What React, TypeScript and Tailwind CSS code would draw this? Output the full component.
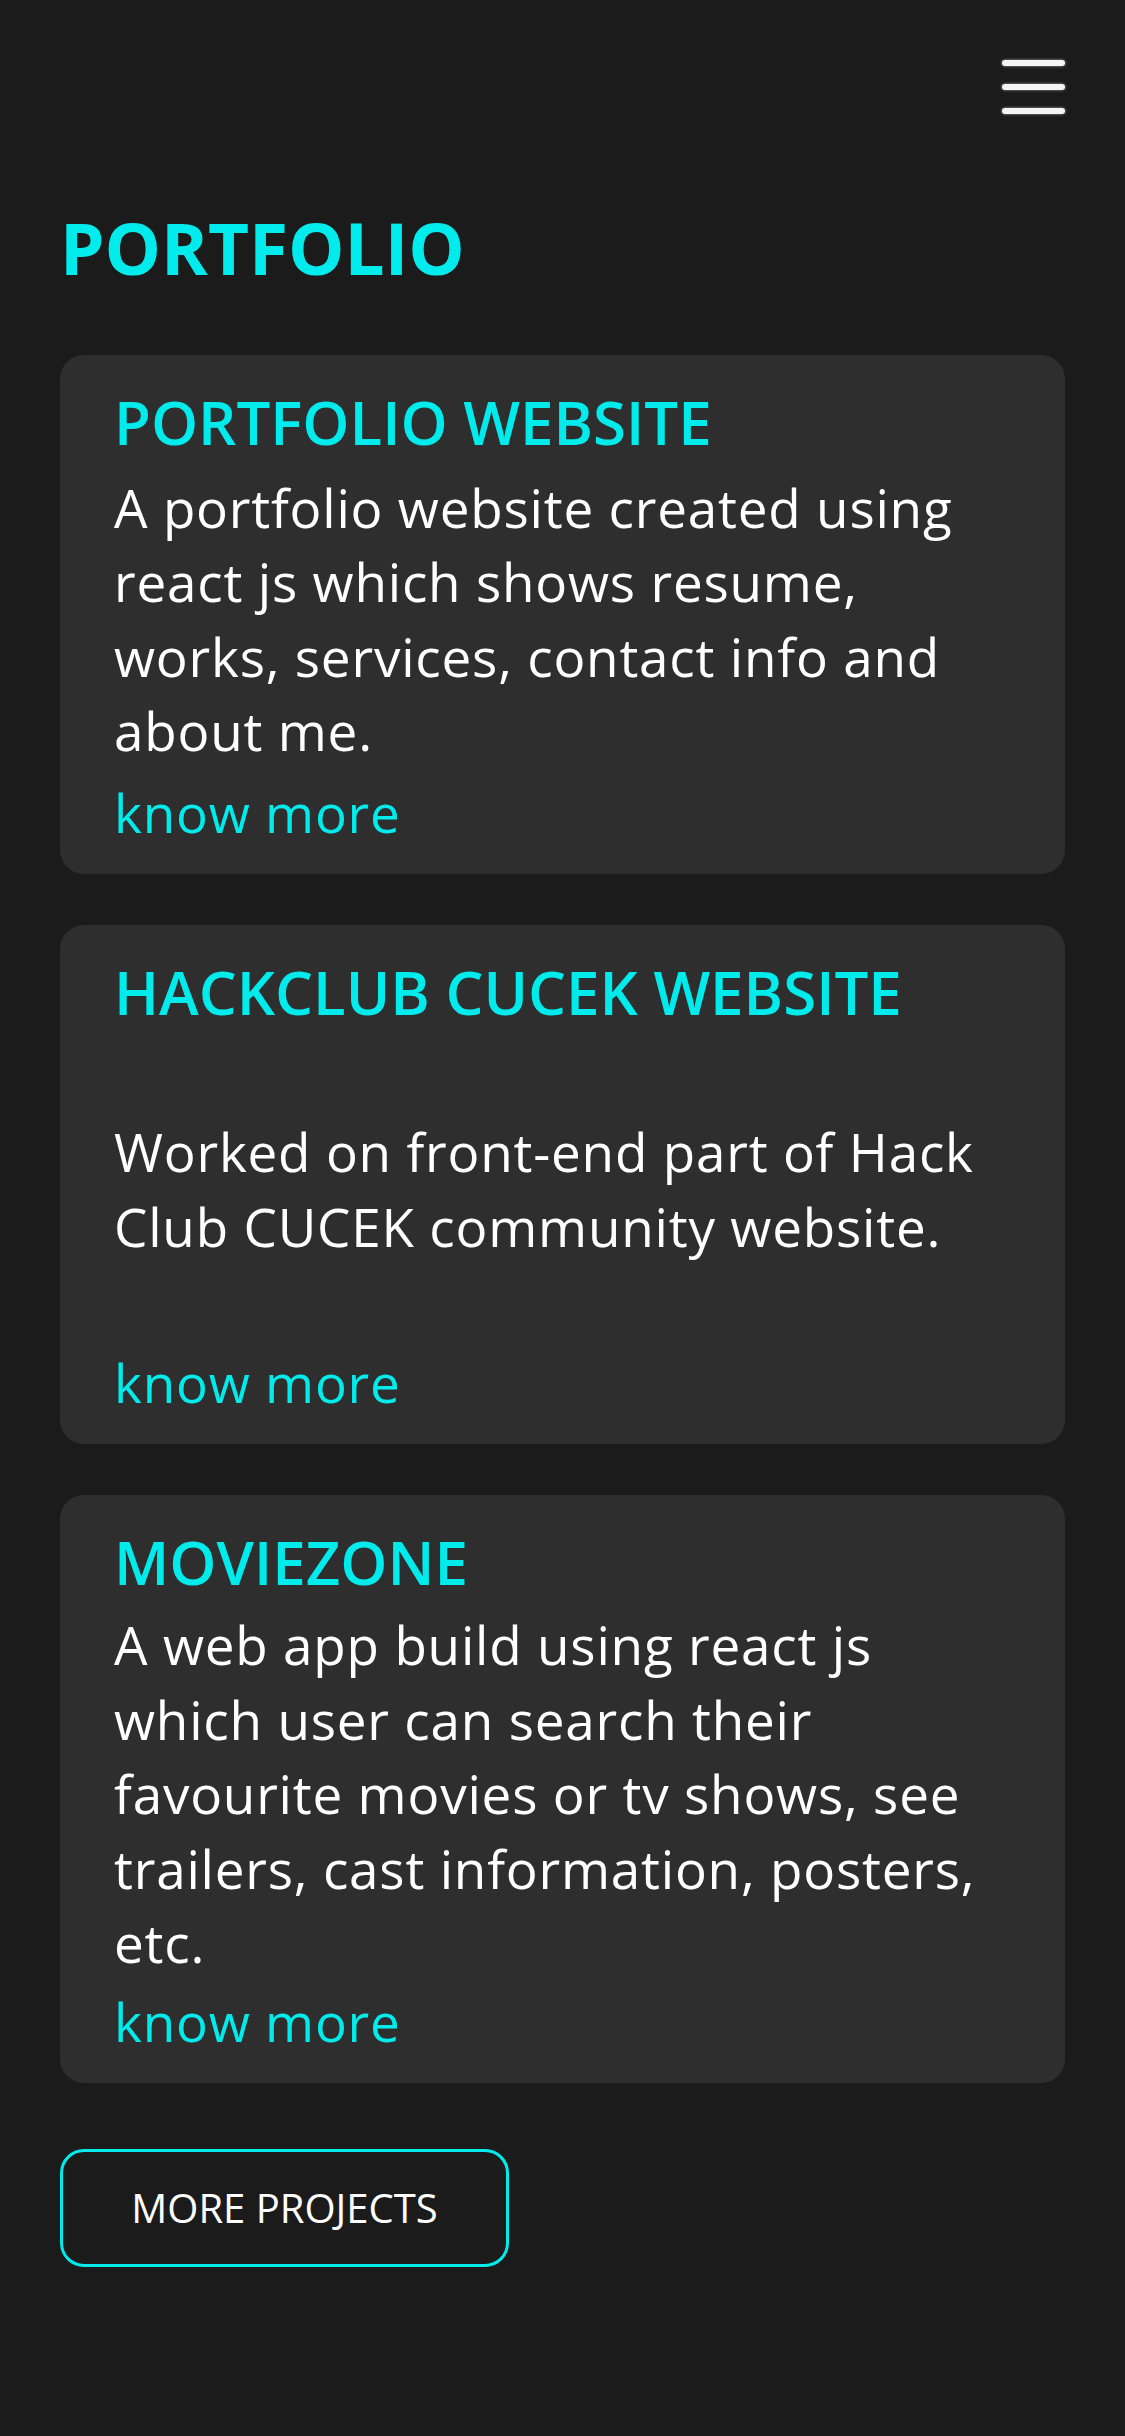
const projects = [
  {
    title: "PORTFOLIO WEBSITE",
    description:
      "A portfolio website created using react js which shows resume, works, services, contact info and about me.",
  },
  {
    title: "HACKCLUB CUCEK WEBSITE",
    description: "Worked on front-end part of Hack Club CUCEK community website.",
  },
  {
    title: "MOVIEZONE",
    description:
      "A web app build using react js which user can search their favourite movies or tv shows, see trailers, cast information, posters, etc.",
  },
];

const MenuIcon = () => {
  return (
    <button className="flex w-[63px] flex-col gap-[18px]" aria-label="menu">
      <span className="block h-[6px] w-full rounded-sm bg-[#f4f4f4] shadow-[0_0_3px_rgba(255,255,255,0.6)]"></span>
      <span className="block h-[6px] w-full rounded-sm bg-[#f4f4f4] shadow-[0_0_3px_rgba(255,255,255,0.6)]"></span>
      <span className="block h-[6px] w-full rounded-sm bg-[#f4f4f4] shadow-[0_0_3px_rgba(255,255,255,0.6)]"></span>
    </button>
  );
};

const ProjectCard = ({ title, description }: { title: string; description: string }) => {
  return (
    <div className="flex min-h-[519px] flex-col justify-between rounded-[24px] bg-[#2e2e2e] pb-[24px] pl-[54px] pr-[50px] pt-[31px]">
      {/* Project title */}
      <h3 className="text-[60px] font-semibold leading-[72px] text-[#00ebeb]">{title}</h3>
      {/* Description */}
      <p className="mt-[10px] text-[53px] font-normal leading-[74.5px] tracking-[0.8px] text-white">
        {description}
      </p>
      {/* Link */}
      <a href="#" className="mt-[4px] block text-[53px] leading-[74.5px] tracking-[0.8px] text-[#00ebeb]">
        know more
      </a>
    </div>
  );
};

export default function App() {
  return (
    <div className="min-h-[2436px] bg-[#1b1b1b] px-[60px] font-['Open_Sans',sans-serif]">
      {/* Header */}
      <header className="flex justify-end pt-[60px]">
        <MenuIcon />
      </header>

      {/* Section title */}
      <h1 className="mt-[98px] text-[71px] font-bold leading-none text-[#00ebeb]">PORTFOLIO</h1>

      {/* Project cards */}
      <div className="mt-[72px] flex flex-col gap-[51px]">
        {projects.map((p) => (
          <ProjectCard key={p.title} title={p.title} description={p.description} />
        ))}
      </div>

      {/* More projects button */}
      <button className="mt-[66px] flex h-[118px] w-[449px] items-center justify-center rounded-[24px] border-[3px] border-[#00ebeb] text-[40px] text-white">
        MORE PROJECTS
      </button>
    </div>
  );
}
